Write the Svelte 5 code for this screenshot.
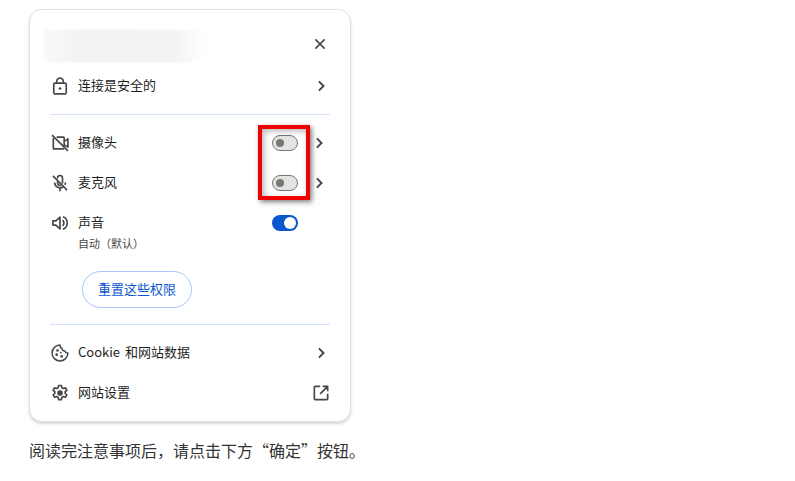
<script>
  const chevron = 'M9.5 6.5 15 12l-5.5 5.5';
</script>

{#snippet chev()}
  <svg class="chev" viewBox="0 0 24 24" aria-hidden="true"><path d={chevron} /></svg>
{/snippet}

<div class="page">
  <div class="card">
    <div class="head">
      <div class="blurred"></div>
      <svg class="close" viewBox="0 0 24 24" aria-hidden="true"><path d="M6.500 6.500l11 11M17.500 6.500l-11 11" /></svg>
    </div>

    <div class="row first">
      <svg class="icon" viewBox="0 0 24 24" aria-hidden="true">
        <path class="line" d="M6 8.500h12a1.500 1.500 0 0 1 1.500 1.500v10a1.500 1.500 0 0 1-1.500 1.500H6A1.500 1.500 0 0 1 4.500 20V10A1.500 1.500 0 0 1 6 8.500zM8 8.500V6.500a4 4 0 0 1 8 0v2" />
        <circle class="fill" cx="12" cy="15" r="1.600" />
      </svg>
      <span class="label">连接是安全的</span>
      {@render chev()}
    </div>

    <div class="divider"></div>

    <div class="perms">
      <div class="row">
        <svg class="icon" viewBox="0 0 24 24" aria-hidden="true">
          <path class="line" d="M8 5h8a1 1 0 0 1 1 1v10M17 10l4.500-3v10L17 14M4 6v13h13M2.500 2.500l19 19" />
        </svg>
        <span class="label">摄像头</span>
        <span class="switch off"></span>
        {@render chev()}
      </div>
      <div class="row">
        <svg class="icon" viewBox="0 0 24 24" aria-hidden="true">
          <path class="line" d="M9 6.500V6a3 3 0 0 1 6 0v6.500M5.500 11.500a6.500 6.500 0 0 0 10.500 5M18.500 11.500a6.500 6.500 0 0 1-.7 2.800M12 18v4M3.500 3.500l17 17M9 10.500v1.500a3 3 0 0 0 4 2.800" />
        </svg>
        <span class="label">麦克风</span>
        <span class="switch off"></span>
        {@render chev()}
      </div>
      <div class="row sound">
        <svg class="icon" viewBox="0 0 24 24" aria-hidden="true">
          <path class="line" d="M3.500 9.500v5h3.500l5 4.500V5L7 9.500zM15 8.500a4.500 4.500 0 0 1 0 7M15.500 4.500a8 8 0 0 1 0 15" />
        </svg>
        <div class="sound-text">
          <span class="label">声音</span>
          <span class="sub">自动（默认）</span>
        </div>
        <span class="switch on"></span>
        <span class="chev-gap"></span>
      </div>
      <button class="reset" type="button">重置这些权限</button>
      <div class="highlight"></div>
    </div>

    <div class="divider"></div>

    <div class="row cookie">
      <svg class="icon" viewBox="0 0 24 24" aria-hidden="true">
        <path class="line dark" d="M12 2.500a9.500 9.500 0 1 0 9.500 9.500c-1.900.3-3.200-.6-3.500-2.400-2 .2-3.600-1.100-3.600-3.300C12.900 6.300 12 4.800 12 2.500z" />
        <circle class="fill dark" cx="9" cy="9" r="1.600" />
        <circle class="fill dark" cx="8" cy="14" r="1.600" />
        <circle class="fill dark" cx="14" cy="16" r="1.600" />
        <circle class="fill dark" cx="13" cy="11.500" r="1.100" />
      </svg>
      <span class="label">Cookie 和网站数据</span>
      {@render chev()}
    </div>
    <div class="row">
      <svg class="icon" viewBox="0 0 24 24" aria-hidden="true">
        <path class="line" d="M10.300 3h3.400l.5 2.600 1.800 1 2.500-.9 1.700 3-2 1.700v2.100l2 1.700-1.700 3-2.500-.9-1.800 1-.5 2.700h-3.400l-.5-2.700-1.800-1-2.500.9-1.700-3 2-1.700v-2.100l-2-1.700 1.700-3 2.500.9 1.800-1z" />
        <circle class="fill" cx="12" cy="12" r="3.400" />
      </svg>
      <span class="label">网站设置</span>
      <svg class="external" viewBox="0 0 24 24" aria-hidden="true">
        <path class="line" d="M11 4H5a1 1 0 0 0-1 1v14a1 1 0 0 0 1 1h14a1 1 0 0 0 1-1v-6M14 4h6v6M20 4l-9 9" />
      </svg>
    </div>
  </div>

  <p class="note">阅读完注意事项后，请点击下方“确定”按钮。</p>
</div>

<style>
  :global(body) {
    margin: 0;
    background: #fff;
    font-family: "Noto Sans CJK SC", "Noto Sans", sans-serif;
  }
  .page {
    padding: 9px 0 0 29px;
  }
  .card {
    width: 322px;
    height: 413px;
    box-sizing: border-box;
    border: 1px solid #e2e2e2;
    border-radius: 13px;
    box-shadow: 0 2px 3px rgba(0, 0, 0, 0.16);
    padding: 0 20px;
    background: #fff;
  }
  .head {
    height: 56px;
    box-sizing: border-box;
    margin-left: -7px;
    padding-top: 19px;
    display: flex;
    justify-content: space-between;
    align-items: flex-start;
  }
  .blurred {
    width: 162px;
    height: 34px;
    background: linear-gradient(90deg, #f9f9f9, #f2f2f2 25%, #f3f3f3 80%, #fff);
    box-shadow: inset 0 0 4px #fff;
  }
  .close {
    width: 20px;
    height: 20px;
    margin: 5px 0 0 0;
    fill: none;
    stroke: #474747;
    stroke-width: 2;
  }
  .row {
    height: 40px;
    display: flex;
    align-items: center;
    font-size: 13px;
    color: #1f1f1f;
  }
  .first {
    margin-bottom: 8px;
  }
  .icon {
    width: 20px;
    height: 20px;
    margin-right: 8px;
    flex: none;
    fill: none;
  }
  .line {
    fill: none;
    stroke: #474747;
    stroke-width: 2;
    stroke-linejoin: round;
  }
  .fill {
    fill: #474747;
  }
  .dark {
    stroke-width: 1.800;
  }
  circle.dark {
    stroke: none;
  }
  .label {
    flex: 1;
    line-height: 20px;
    padding-bottom: 2px;
  }
  .chev {
    width: 20px;
    height: 20px;
    flex: none;
    margin-right: -1px;
    fill: none;
    stroke: #474747;
    stroke-width: 2.400;
  }
  .chev-gap {
    width: 20px;
    flex: none;
    margin-right: 1px;
  }
  .external {
    width: 20px;
    height: 20px;
    flex: none;
    margin-right: -1px;
  }
  .divider {
    height: 1px;
    background: #d3e3fd;
  }
  .perms {
    position: relative;
    padding-top: 8px;
  }
  .perms .chev {
    margin-right: 1px;
    margin-left: 0;
  }
  .switch {
    width: 26px;
    height: 16px;
    box-sizing: border-box;
    border-radius: 8px;
    margin-right: 11px;
    flex: none;
    display: flex;
    align-items: center;
  }
  .switch::after {
    content: "";
    display: block;
    border-radius: 50%;
  }
  .off {
    background: #e3e3e0;
    border: 1px solid #747775;
    padding-left: 3px;
  }
  .off::after {
    width: 8px;
    height: 8px;
    background: #747775;
  }
  .on {
    background: #0b57d0;
    justify-content: flex-end;
    padding-right: 2px;
  }
  .on::after {
    width: 12px;
    height: 12px;
    background: #fff;
  }
  .sound {
    align-items: flex-start;
    height: 48px;
    padding-top: 10px;
    box-sizing: border-box;
  }
  .sound .switch {
    margin-top: 2px;
  }
  .sound-text {
    flex: 1;
    display: flex;
    flex-direction: column;
    margin-top: -1px;
  }
  .sound-text .label {
    padding-bottom: 0;
  }
  .sub {
    font-size: 11px;
    line-height: 20px;
    margin-top: 1px;
    color: #474747;
  }
  .reset {
    display: block;
    margin: 20px 0 16px 32px;
    width: 110px;
    height: 37px;
    padding: 0 0 2px;
    border: 1px solid #a8c7fa;
    border-radius: 19px;
    background: #fff;
    color: #0b57d0;
    font: inherit;
    font-size: 13px;
  }
  .highlight {
    position: absolute;
    left: 208px;
    top: 10px;
    width: 52px;
    height: 75px;
    box-sizing: border-box;
    border: 4px solid #f00000;
    box-shadow: 2px 2px 5px rgba(0, 0, 0, 0.5), inset 2px 2px 6px rgba(0, 0, 0, 0.3);
  }
  .cookie {
    margin-top: 8px;
  }
  .cookie .label {
    word-spacing: 2px;
  }
  .note {
    margin: 17px 0 0;
    font-size: 16px;
    line-height: 22px;
    color: #333;
  }
</style>
